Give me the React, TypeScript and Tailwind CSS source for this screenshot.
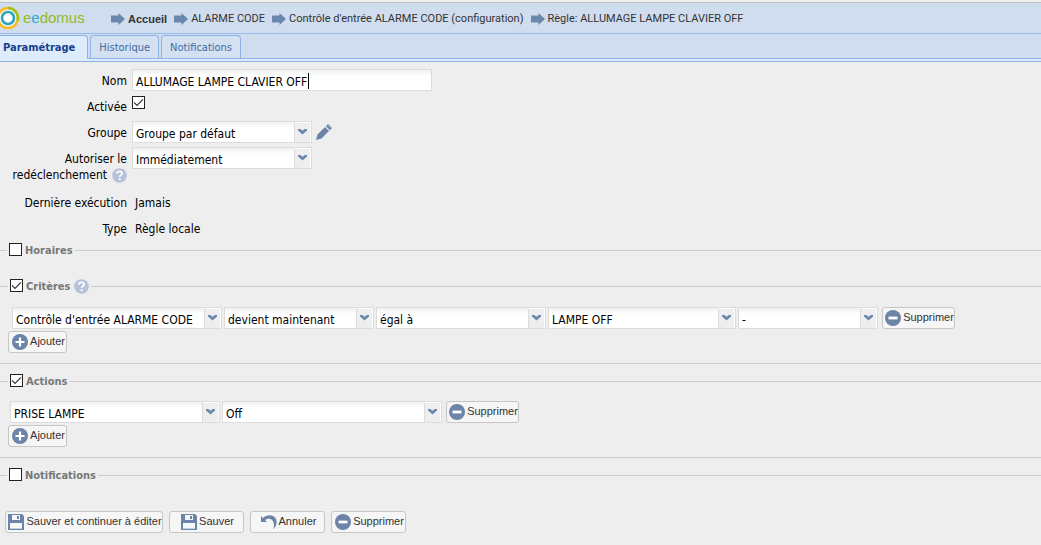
import React, { useState } from "react";

const TAHOMA = "font-['DejaVu_Sans_Condensed','Noto_Sans',sans-serif]";
const ARIAL = "font-['Liberation_Sans',Arial,sans-serif]";

function Logo() {
  return (
    <a href="#accueil" aria-label="eedomus" className="flex w-[111px] shrink-0 items-center">
      <svg width="20" height="24" viewBox="0 0 20 24" aria-hidden="true">
        <circle cx="8" cy="12" r="9" fill="#f4f8fb" />
        <circle cx="8" cy="12" r="10" fill="none" stroke="#fbba1e" strokeWidth="2.6" />
        <path d="M8 2a10 10 0 0 1 9.6 12.6" fill="none" stroke="#9ac31c" strokeWidth="2.6" />
        <circle cx="8" cy="12" r="6" fill="#fff" stroke="#2fa3bd" strokeWidth="2.6" />
      </svg>
      <span className="ml-[3px] font-['Liberation_Sans',sans-serif] text-[15px] leading-5 text-[#93bb1f]">
        e<span className="text-[#35a8c9]">e</span>domus
      </span>
    </a>
  );
}

function CrumbArrow() {
  return (
    <svg width="14" height="12" viewBox="0 0 14 12" className="shrink-0" aria-hidden="true">
      <path d="M0 2.500h7.500V0L14 6l-6.500 6V9.500H0z" fill="#6b87ab" />
    </svg>
  );
}

function Crumb({ children, bold }: { children: string; bold?: boolean }) {
  return (
    <a href="#fil" className="flex items-center gap-[3px] whitespace-nowrap text-[#333]">
      <CrumbArrow />
      <span className={bold ? "font-bold" : "font-['Roboto',sans-serif]"}>{children}</span>
    </a>
  );
}

function Tab({ children, active }: { children: string; active?: boolean }) {
  return (
    <button
      type="button"
      role="tab"
      aria-selected={!!active}
      className={
        active
          ? "-mb-px h-6 rounded-tr border-t border-r border-[#8db2e3] bg-[#deecfd] pr-3 pl-[3px] font-bold text-[#15428b]"
          : "h-[23px] rounded-t border border-b-0 border-[#8db2e3] bg-[#d3e1f1] px-2 pt-[2px] text-[#416aa3]"
      }
    >
      {children}
    </button>
  );
}

function Combo({ id, label, value, width }: { id: string; label: string; value: string; width: string }) {
  return (
    <div className={`relative h-[22px] shrink-0 ${width}`}>
      <select
        id={id}
        aria-label={label}
        className="h-full w-full appearance-none border border-[#dcdcdc] bg-white bg-linear-to-b from-[#eef2f2] to-white to-30% pt-[3px] pr-5 pl-[3px] text-[12px] leading-4 text-black outline-none"
      >
        <option>{value}</option>
      </select>
      <span className="pointer-events-none absolute top-px right-px flex h-5 w-[17px] items-center justify-center border-t border-r border-l border-t-white border-r-white border-l-[#dcdcdc] bg-[#eee] pb-[2px]">
        <svg width="9" height="6" viewBox="0 0 9 6" aria-hidden="true">
          <path d="M0 0h2.200l2.300 1.800L6.800 0H9v1.500L4.500 5.500 0 1.500z" fill="#6b87ab" />
        </svg>
      </span>
    </div>
  );
}

function Check({ id, initial }: { id: string; initial: boolean }) {
  const [on, setOn] = useState(initial);
  return (
    <span className="relative block h-[13px] w-[13px] shrink-0">
      <input
        id={id}
        type="checkbox"
        checked={on}
        onChange={(e) => setOn(e.target.checked)}
        className="block h-[13px] w-[13px] appearance-none border border-[#222] bg-white"
      />
      {on && (
        <svg width="13" height="13" viewBox="0 0 13 13" className="pointer-events-none absolute inset-0" aria-hidden="true">
          <path d="M2 6.300l3 3 6-6" fill="none" stroke="#333" strokeWidth="1.200" />
        </svg>
      )}
    </span>
  );
}

function Help() {
  return (
    <svg width="15" height="15" viewBox="0 0 15 15" className="inline-block shrink-0" aria-hidden="true">
      <circle cx="7.500" cy="7.500" r="7.300" fill="#b5c2d7" />
      <path d="M5 5.700C5 4.200 6 3.400 7.500 3.400S10 4.300 10 5.500C10 7.200 7.600 7.300 7.600 9" fill="none" stroke="#fff" strokeWidth="1.700" />
      <rect x="6.700" y="10.200" width="1.900" height="1.900" fill="#fff" />
    </svg>
  );
}

function RoundIcon({ plus }: { plus?: boolean }) {
  return (
    <svg width="16" height="16" viewBox="0 0 16 16" className="shrink-0" aria-hidden="true">
      <circle cx="8" cy="8" r="8" fill="#6b84a8" />
      <path d={plus ? "M3.500 8h9M8 3.500v9" : "M3.500 8h9"} stroke="#fff" strokeWidth={plus ? 2.2 : 2.8} />
    </svg>
  );
}

function DiskIcon() {
  return (
    <svg width="16" height="16" viewBox="0 0 16 16" className="shrink-0" aria-hidden="true">
      <path d="M0 0h14l2 2v14H0z" fill="#6b84a8" />
      <path d="M4 1h8v5H4z" fill="#f4f6f9" />
      <path d="M9 2h2v3H9z" fill="#6b84a8" />
      <path d="M2 9h12v6H2z" fill="#f7f8fa" />
      <path d="M2 14h12v1H2z" fill="#c8d2df" />
    </svg>
  );
}

function UndoIcon() {
  return (
    <svg width="16" height="16" viewBox="0 0 16 16" className="shrink-0" aria-hidden="true">
      <path d="M0 2v6h6L4.200 6.200C6 4.600 9 4.300 11 6c2.200 2 2.600 5.500 1.200 9.500C15.500 12 17 7 14 3.500 11 .4 5.800.3 2 4z" fill="#6b84a8" />
    </svg>
  );
}

function IconButton({ icon, children, width }: { icon: React.ReactNode; children: string; width: string }) {
  return (
    <button
      type="button"
      className={`flex h-[22px] shrink-0 items-center justify-center gap-[2px] rounded-[3px] border border-[#c6c6c6] bg-[#f6f6f6] pl-[2px] text-[11px] leading-4 whitespace-nowrap text-[#333] ${ARIAL} ${width}`}
    >
      {icon}
      <span className="pb-[2px]">{children}</span>
    </button>
  );
}

function Section({
  id,
  title,
  checked,
  help,
  className,
  children,
}: {
  id: string;
  title: string;
  checked: boolean;
  help?: boolean;
  className: string;
  children?: React.ReactNode;
}) {
  return (
    <fieldset className={`min-w-0 border-t border-[#ccc] ${className}`}>
      <legend
        className={`flex h-4 items-start gap-[3px] px-[2px] text-[11px] leading-4 font-bold text-[#777] ${checked ? "ml-2" : "ml-[7px]"}`}
      >
        <span className="pt-px">
          <Check id={id} initial={checked} />
        </span>
        <label htmlFor={id} className="pt-px">{title}</label>
        {help && <span className="flex pt-px pl-px"><Help /></span>}
      </legend>
      {children}
    </fieldset>
  );
}

export default function App() {
  return (
    <div className={`min-h-screen bg-[#eee] pb-3 text-[12px] leading-4 text-black ${TAHOMA}`}>
      <header className="border-t-2 border-[#eee] bg-[#d0ddee]">
        <nav
          aria-label="Fil d'Ariane"
          className={`flex h-8 items-center border-t border-b border-t-[#c0c0c0] border-b-[#99bbe8] text-[11px] ${ARIAL}`}
        >
          <Logo />
          <div className="flex items-center gap-[7px] pt-[2px]">
            <Crumb bold>Accueil</Crumb>
            <Crumb>ALARME CODE</Crumb>
            <Crumb>Contrôle d'entrée ALARME CODE (configuration)</Crumb>
            <Crumb>Règle: ALLUMAGE LAMPE CLAVIER OFF</Crumb>
          </div>
        </nav>
        <div role="tablist" className="flex items-end gap-[2px] border-b border-[#8db2e3] pt-px text-[11px]">
          <Tab active>Paramétrage</Tab>
          <Tab>Historique</Tab>
          <Tab>Notifications</Tab>
        </div>
        <div className="h-[3px] border-b border-[#8db2e3] bg-[#deecfd]" />
      </header>

      <form onSubmit={(e) => e.preventDefault()}>
        <div className="grid grid-cols-[127px_1fr] gap-x-[5px] pt-[7px]">
          <label htmlFor="nom" className="pt-1 text-right">Nom</label>
          <div className="relative h-[26px]">
            <input
              id="nom"
              type="text"
              defaultValue="ALLUMAGE LAMPE CLAVIER OFF"
              className="block h-[22px] w-[300px] border border-[#dcdcdc] bg-white bg-linear-to-b from-[#eef2f2] to-white to-30% px-[3px] pt-[3px] text-[12px] leading-4 outline-none"
            />
            <span className="pointer-events-none absolute top-1 left-[176px] h-4 w-px bg-black" />
          </div>

          <label htmlFor="activee" className="pt-1 text-right">Activée</label>
          <div className="h-[26px] pt-px">
            <Check id="activee" initial />
          </div>

          <label htmlFor="groupe" className="pt-1 text-right">Groupe</label>
          <div className="flex h-[26px] items-start gap-1">
            <Combo id="groupe" label="Groupe" value="Groupe par défaut" width="w-[180px]" />
            <button type="button" aria-label="Modifier le groupe" className="pt-[3px]">
              <svg width="16" height="16" viewBox="0 0 16 16" aria-hidden="true">
                <path d="M0 16l1.500-5.500L9 3l4 4-7.500 7.500z" fill="#6b84a8" />
                <path d="M10 2.200L12 0l4 4-2.200 2.200z" fill="#6b84a8" />
                <path d="M12.600 1.600l1.800 1.800" stroke="#aebdd0" strokeWidth="1" />
              </svg>
            </button>
          </div>

          <label htmlFor="autoriser" className="flex flex-wrap items-center justify-end pt-1 text-right">
            <span>Autoriser le</span>
            <span className="flex items-center gap-[5px]">redéclenchement <Help /></span>
          </label>
          <Combo id="autoriser" label="Autoriser le redéclenchement" value="Immédiatement" width="w-[180px]" />

          <div className="pt-3 text-right">Dernière exécution</div>
          <div className="h-[38px] pt-3 pl-[3px]">Jamais</div>
          <div className="text-right">Type</div>
          <div className="pl-[3px]">Règle locale</div>
        </div>

        <Section id="horaires" title="Horaires" checked={false} className="mt-[5px]" />

        <Section id="criteres" title="Critères" checked help className="mt-5 border-b pb-[10px]">
          <div className="flex flex-wrap gap-[2px] pt-[13px] pl-3">
            <Combo id="c1" label="Périphérique" value="Contrôle d'entrée ALARME CODE" width="w-[210px]" />
            <Combo id="c2" label="Condition" value="devient maintenant" width="w-[150px]" />
            <Combo id="c3" label="Opérateur" value="égal à" width="w-[170px]" />
            <Combo id="c4" label="Valeur" value="LAMPE OFF" width="w-[188px]" />
            <Combo id="c5" label="Complément" value="-" width="w-[140px]" />
            <div className="pl-[2px]">
              <IconButton icon={<RoundIcon />} width="w-[73px]">Supprimer</IconButton>
            </div>
          </div>
          <div className="flex pt-[2px] pl-2">
            <IconButton icon={<RoundIcon plus />} width="w-[59px]">Ajouter</IconButton>
          </div>
        </Section>

        <Section id="actions" title="Actions" checked className="mt-[9px] border-b pb-[10px]">
          <div className="flex flex-wrap gap-[2px] pt-3 pl-[10px]">
            <Combo id="a1" label="Périphérique" value="PRISE LAMPE" width="w-[210px]" />
            <Combo id="a2" label="Action" value="Off" width="w-[220px]" />
            <div className="pl-[2px]">
              <IconButton icon={<RoundIcon />} width="w-[73px]">Supprimer</IconButton>
            </div>
          </div>
          <div className="flex pt-[2px] pl-2">
            <IconButton icon={<RoundIcon plus />} width="w-[59px]">Ajouter</IconButton>
          </div>
        </Section>

        <Section id="notifications" title="Notifications" checked={false} className="mt-[9px]" />

        <div className="mt-7 flex flex-wrap gap-[6px] pl-[5px]">
          <IconButton icon={<DiskIcon />} width="w-[158px]">Sauver et continuer à éditer</IconButton>
          <IconButton icon={<DiskIcon />} width="w-[75px]">Sauver</IconButton>
          <IconButton icon={<UndoIcon />} width="w-[75px]">Annuler</IconButton>
          <IconButton icon={<RoundIcon />} width="w-[75px]">Supprimer</IconButton>
        </div>
      </form>
    </div>
  );
}
